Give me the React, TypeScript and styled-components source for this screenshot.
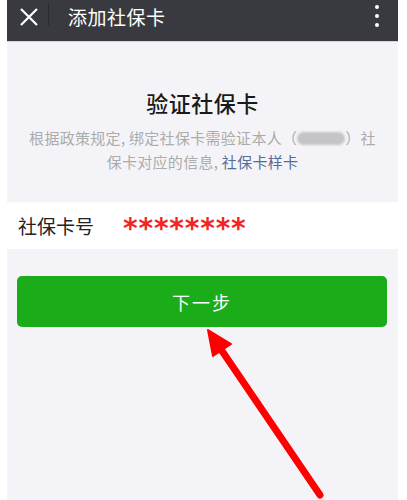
import React from 'react';
import styled, { createGlobalStyle } from 'styled-components';

const GlobalStyle = createGlobalStyle`
  html, body {
    margin: 0;
    padding: 0;
    background: #ffffff;
  }

  body {
    font-family: 'Noto Sans CJK SC', 'Noto Sans', sans-serif;
  }
`;

const Page = styled.div`
  position: relative;
  width: 407px;
  height: 500px;
  overflow: hidden;
  background: #ffffff;
`;

const Frame = styled.div`
  margin: 0 9px 0 7px;
  height: 500px;
  background: #f4f4f8;
`;

const TopBar = styled.header`
  display: flex;
  align-items: center;
  height: 33px;
  padding-bottom: 8px;
  background: #393a3f;
  border-bottom: 1px solid #d6d6da;
`;

const CloseButton = styled.button`
  display: flex;
  align-items: center;
  justify-content: center;
  width: 41px;
  height: 33px;
  padding: 0 0 0 2px;
  border: 0;
  background: transparent;
`;

const Divider = styled.span`
  width: 1px;
  height: 23px;
  margin-top: -4px;
  background: #2a2b2f;
`;

const BarTitle = styled.h1`
  flex: 1;
  margin: 0 0 0 19px;
  color: #ffffff;
  font-size: 19px;
  font-weight: 400;
  letter-spacing: 0.5px;
`;

const MoreButton = styled.button`
  display: flex;
  flex-direction: column;
  align-items: center;
  gap: 5px;
  width: 30px;
  margin-right: 6px;
  margin-top: -2px;
  border: 0;
  background: transparent;
`;

const Dot = styled.span`
  width: 4px;
  height: 4px;
  border-radius: 50%;
  background: #ffffff;
`;

const Intro = styled.section`
  padding: 45px 8px 28px;
  text-align: center;
`;

const Heading = styled.h2`
  margin: 0 0 9px;
  color: #1a1a1a;
  font-size: 22px;
  font-weight: 500;
  line-height: 30px;
  letter-spacing: 0.5px;
`;

const Note = styled.p`
  margin: 0;
  color: #ababab;
  font-size: 15px;
  line-height: 24px;
  letter-spacing: 0.3px;
`;

const Masked = styled.span`
  display: inline-block;
  width: 48px;
  height: 13px;
  vertical-align: -1px;
  border-radius: 7px;
  background: #c4c4c8;
  filter: blur(0.8px);
`;

const SampleLink = styled.a`
  color: #576b95;
  text-decoration: none;
`;

const FieldRow = styled.div`
  display: flex;
  align-items: center;
  height: 47px;
  padding-left: 11px;
  background: #ffffff;
`;

const FieldLabel = styled.span`
  width: 105px;
  color: #222222;
  font-size: 19px;
`;

const FieldValue = styled.span`
  color: #f42424;
  font-family: 'DejaVu Sans', sans-serif;
  font-size: 28px;
  font-weight: 700;
  line-height: 1;
  letter-spacing: 0.8px;
  margin-top: 6px;
`;

const Actions = styled.div`
  padding: 27px 11px 0 10px;
`;

const PrimaryButton = styled.button`
  width: 100%;
  height: 51px;
  border: 0;
  border-radius: 5px;
  background: #1aad19;
  color: #ffffff;
  font-family: 'Noto Sans CJK SC', sans-serif;
  font-size: 18px;
  letter-spacing: 2px;
`;

const Annotation = styled.svg`
  position: absolute;
  inset: 0;
  pointer-events: none;
`;

export default function App() {
  return (
    <Page>
      <GlobalStyle />
      <Frame>
        <TopBar>
          <CloseButton aria-label="关闭">
            <svg width="18" height="18" viewBox="0 0 18 18">
              <path d="M1 1 L17 17 M17 1 L1 17" stroke="#ffffff" strokeWidth="2.2" />
            </svg>
          </CloseButton>
          <Divider />
          <BarTitle>添加社保卡</BarTitle>
          <MoreButton aria-label="更多">
            <Dot />
            <Dot />
            <Dot />
          </MoreButton>
        </TopBar>

        <Intro>
          <Heading>验证社保卡</Heading>
          <Note>
            根据政策规定, 绑定社保卡需验证本人（<Masked />）社
            <br />
            保卡对应的信息, <SampleLink href="#">社保卡样卡</SampleLink>
          </Note>
        </Intro>

        <FieldRow>
          <FieldLabel>社保卡号</FieldLabel>
          <FieldValue>********</FieldValue>
        </FieldRow>

        <Actions>
          <PrimaryButton>下一步</PrimaryButton>
        </Actions>
      </Frame>

      <Annotation width="407" height="500" viewBox="0 0 407 500">
        <line x1="320" y1="495" x2="218" y2="345" stroke="#ff0000" strokeWidth="7" strokeLinecap="round" />
        <polygon points="208,330 231,344 213,356" fill="#ff0000" stroke="#ff0000" strokeWidth="2" strokeLinejoin="round" />
      </Annotation>
    </Page>
  );
}
